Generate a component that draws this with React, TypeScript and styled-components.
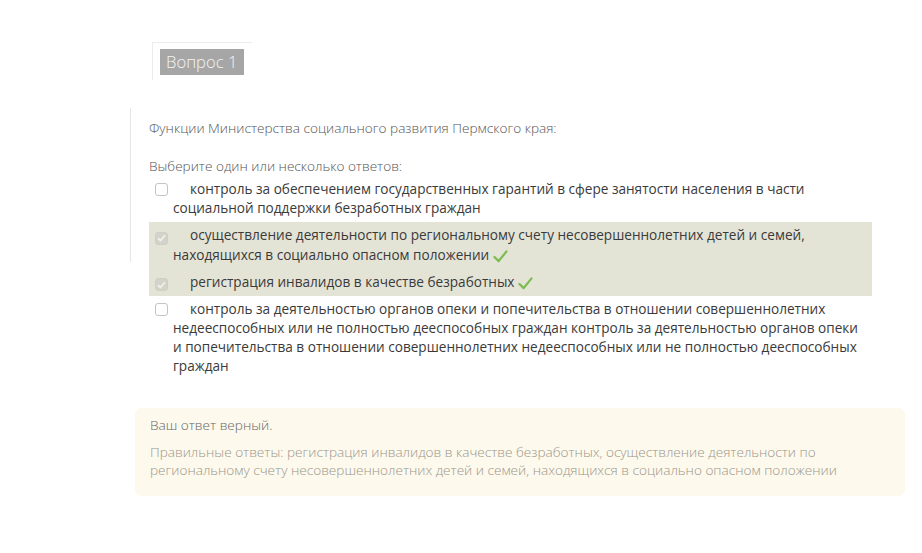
import * as React from 'react';
import styled, { createGlobalStyle } from 'styled-components';

interface Answer {
  text: string;
  checked: boolean;
}

const answers: Answer[] = [
  {
    text: 'контроль за обеспечением государственных гарантий в сфере занятости населения в части социальной поддержки безработных граждан',
    checked: false,
  },
  {
    text: 'осуществление деятельности по региональному счету несовершеннолетних детей и семей, находящихся в социально опасном положении',
    checked: true,
  },
  {
    text: 'регистрация инвалидов в качестве безработных',
    checked: true,
  },
  {
    text: 'контроль за деятельностью органов опеки и попечительства в отношении совершеннолетних недееспособных или не полностью дееспособных граждан контроль за деятельностью органов опеки и попечительства в отношении совершеннолетних недееспособных или не полностью дееспособных граждан',
    checked: false,
  },
];

const GlobalStyle = createGlobalStyle`
  html, body {
    margin: 0;
    padding: 0;
    background: #fff;
  }
  body {
    font-family: "Open Sans", "Liberation Sans", sans-serif;
    font-size: 13.6px;
    color: #333;
  }
`;

const Page = styled.div`
  width: 922px;
  height: 553px;
  overflow: hidden;
  padding-top: 42px;
  box-sizing: border-box;
`;

const Info = styled.div`
  margin-left: 152px;
  width: 100px;
  height: 38px;
  border-top: 1px solid #ececec;
  border-left: 1px solid #ececec;
  padding: 6px 0 0 7px;
  box-sizing: border-box;
`;

const Badge = styled.span`
  display: inline-block;
  background: #a6a6a6;
  color: #f4f4f4;
  font-weight: 300;
  font-size: 16.6px;
  line-height: 26px;
  padding: 0 6px;
  width: 84px;
  box-sizing: border-box;
`;

const Content = styled.div`
  position: relative;
  margin: 28px 0 0 130px;
  padding: 10px 0 0 19px;

  &::before {
    content: '';
    position: absolute;
    left: 0;
    top: 0;
    width: 1px;
    height: 154px;
    background: #e6e6e6;
  }
`;

const QuestionText = styled.div`
  font-weight: 300;
  color: #555;
  line-height: 19px;
  margin-bottom: 19px;
`;

const Prompt = styled.div`
  font-weight: 300;
  color: #555;
  line-height: 19px;
  margin-bottom: 1px;
`;

const AnswerList = styled.div`
  width: 723px;
`;

const Row = styled.div<{ $marked: boolean }>`
  background: ${(p) => (p.$marked ? '#e4e4d6' : 'transparent')};
  padding: 3px 4px 5px 24px;
  line-height: 19px;
  color: #3a3a3a;
`;

const Box = styled.span<{ $checked: boolean }>`
  display: inline-flex;
  align-items: center;
  justify-content: center;
  width: 13px;
  height: 13px;
  box-sizing: border-box;
  margin: 0 22px 0 -18px;
  vertical-align: -2px;
  border-radius: 3px;
  border: 1px solid ${(p) => (p.$checked ? '#cfcfc6' : '#c4c4c4')};
  background: ${(p) => (p.$checked ? '#d3d3ca' : '#fff')};
`;

const Tick = styled.svg`
  display: inline-block;
  width: 15px;
  height: 13px;
  margin-left: 4px;
  vertical-align: -3px;
`;

const Feedback = styled.div`
  margin: 28px 0 0 135px;
  width: 770px;
  box-sizing: border-box;
  background: #fdf9ed;
  border-radius: 6px;
  padding: 8px 15px 17px;
  font-weight: 300;
  line-height: 18px;
`;

const Verdict = styled.div`
  color: #666;
  margin-bottom: 9px;
`;

const RightAnswer = styled.div`
  color: #9b968a;
`;

const CheckBox = ({ checked }: { checked: boolean }) => (
  <Box $checked={checked}>
    {checked && (
      <svg width="9" height="8" viewBox="0 0 9 8">
        <path d="M1 4.2 L3.4 6.5 L8 1.2" fill="none" stroke="#f2f2ee" strokeWidth="1.6" />
      </svg>
    )}
  </Box>
);

const GreenTick = () => (
  <Tick viewBox="0 0 16 14">
    <path
      d="M1.5 7.5 L6 12 L14.5 1.5"
      fill="none"
      stroke="#7cbb50"
      strokeWidth="2.4"
      strokeLinecap="round"
      strokeLinejoin="round"
    />
  </Tick>
);

const App = () => (
  <Page>
    <GlobalStyle />
    <Info>
      <Badge>Вопрос 1</Badge>
    </Info>
    <Content>
      <QuestionText>Функции Министерства социального развития Пермского края:</QuestionText>
      <Prompt>Выберите один или несколько ответов:</Prompt>
      <AnswerList>
        {answers.map((a, i) => (
          <Row key={i} $marked={a.checked}>
            <CheckBox checked={a.checked} />
            {a.text}
            {a.checked && <GreenTick />}
          </Row>
        ))}
      </AnswerList>
    </Content>
    <Feedback>
      <Verdict>Ваш ответ верный.</Verdict>
      <RightAnswer>
        Правильные ответы: регистрация инвалидов в качестве безработных, осуществление деятельности по
        региональному счету несовершеннолетних детей и семей, находящихся в социально опасном положении
      </RightAnswer>
    </Feedback>
  </Page>
);

export default App;
